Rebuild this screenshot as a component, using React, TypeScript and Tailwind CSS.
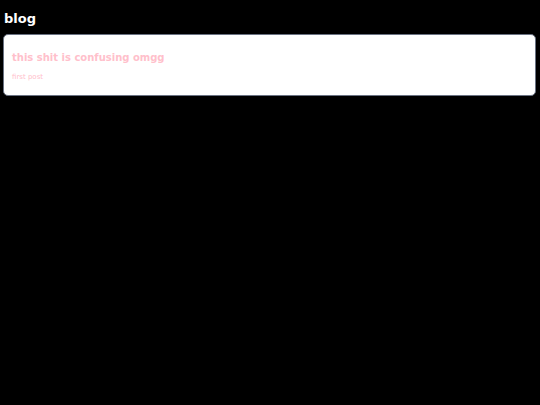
export default function App() {
  return (
    <div className="min-h-[405px] bg-black pb-1 pl-[3px] pr-1 pt-1 font-['DejaVu_Sans',sans-serif]">
      <h1 className="pl-px pt-[6px] text-[13px] font-bold leading-[18px] text-white">blog</h1>
      <div className="mt-[6px] rounded-[5px] border border-gray-500 bg-white px-2 pb-[13px] pt-[15px]">
        <h2 className="text-[10px] font-bold leading-[16px] text-[#ffc0cb]">this shit is confusing omgg</h2>
        <p className="mt-[6px] text-[7px] leading-[10px] text-[#ffc0cb]">first post</p>
      </div>
    </div>
  );
}
